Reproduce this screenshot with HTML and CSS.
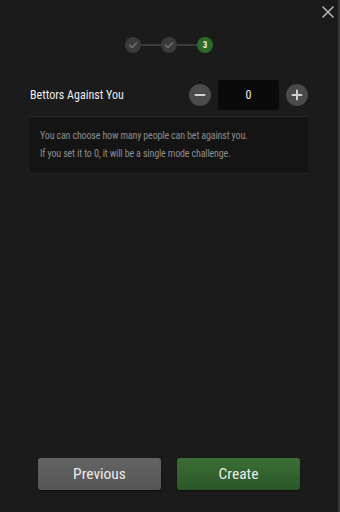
FILE: index.html
```html
<!DOCTYPE html>
<html>
<head>
<meta charset="utf-8">
<link rel="stylesheet" href="styles.css">
</head>
<body>
<div class="modal">
  <button class="close" aria-label="Close">
    <svg width="12" height="12" viewBox="0 0 12 12"><path d="M1 1L11 11M11 1L1 11" stroke="#b4b4b4" stroke-width="1.6" stroke-linecap="round"/></svg>
  </button>
  <div class="steps">
    <span class="step done"><svg width="10" height="10" viewBox="0 0 10 10"><path d="M1.5 5.2L4 7.5L8.5 2.8" fill="none" stroke="#6e6e6e" stroke-width="1.6" stroke-linecap="round" stroke-linejoin="round"/></svg></span>
    <span class="bar"></span>
    <span class="step done"><svg width="10" height="10" viewBox="0 0 10 10"><path d="M1.5 5.2L4 7.5L8.5 2.8" fill="none" stroke="#6e6e6e" stroke-width="1.6" stroke-linecap="round" stroke-linejoin="round"/></svg></span>
    <span class="bar"></span>
    <span class="step active">3</span>
  </div>
  <div class="field">
    <span class="label">Bettors Against You</span>
    <div class="counter">
      <button class="round"><svg width="12" height="12" viewBox="0 0 12 12"><path d="M1.5 6H10.5" stroke="#d0d0d0" stroke-width="2" stroke-linecap="round"/></svg></button>
      <div class="value">0</div>
      <button class="round"><svg width="12" height="12" viewBox="0 0 12 12"><path d="M1.5 6H10.5M6 1.5V10.5" stroke="#d0d0d0" stroke-width="2" stroke-linecap="round"/></svg></button>
    </div>
  </div>
  <div class="info">
    <p>You can choose how many people can bet against you.</p>
    <p>If you set it to 0, it will be a single mode challenge.</p>
  </div>
  <div class="spacer"></div>
  <div class="actions">
    <button class="btn prev">Previous</button>
    <button class="btn create">Create</button>
  </div>
</div>
</body>
</html>
```
FILE: styles.css
```css
html, body {
  margin: 0;
  padding: 0;
  background: #1b1b1b;
}
body {
  width: 340px;
  height: 512px;
  overflow: hidden;
  font-family: "Roboto Condensed", Roboto, "Liberation Sans", sans-serif;
}
.modal {
  position: relative;
  box-sizing: border-box;
  width: 340px;
  height: 512px;
  border-right: 2px solid #363636;
  padding: 37px 30px 22px 30px;
  display: flex;
  flex-direction: column;
  background: #1b1b1b;
}
.close {
  position: absolute;
  top: 6px;
  right: 4px;
  background: none;
  border: 0;
  padding: 0;
  width: 12px;
  height: 12px;
  display: flex;
}
.steps {
  display: flex;
  align-items: center;
  justify-content: center;
  height: 16px;
}
.step {
  width: 16px;
  height: 16px;
  border-radius: 50%;
  display: flex;
  align-items: center;
  justify-content: center;
  flex: none;
}
.step.done {
  background: #3a3a3a;
}
.step.active {
  background: #2c6a2a;
  color: #f0f0f0;
  font-size: 9px;
  font-weight: 700;
}
.bar {
  width: 20px;
  height: 2px;
  background: #3a3a3a;
}
.field {
  display: flex;
  align-items: center;
  justify-content: space-between;
  margin-top: 27px;
}
.label {
  color: #ececec;
  font-size: 12px;
}
.counter {
  display: flex;
  align-items: center;
}
.round {
  width: 22px;
  height: 22px;
  border-radius: 50%;
  border: 0;
  padding: 0;
  background: #4a4a4a;
  display: flex;
  align-items: center;
  justify-content: center;
}
.value {
  width: 61px;
  height: 30px;
  margin: 0 7px;
  background: #0a0a0a;
  border-radius: 3px;
  color: #f0f0f0;
  font-size: 12px;
  display: flex;
  align-items: center;
  justify-content: center;
}
.info {
  margin-top: 6px;
  background: #141414;
  border-top: 1px solid #2a2a2a;
  border-bottom: 1px solid #252525;
  padding: 10px 10px 10px 10px;
  color: #8c8c8c;
  font-size: 10px;
  letter-spacing: -0.15px;
  line-height: 18px;
}
.info p {
  margin: 0;
}
.spacer {
  flex: 1;
}
.actions {
  display: flex;
  justify-content: space-between;
  padding: 0 8px;
}
.btn {
  width: 123px;
  height: 32px;
  border: 0;
  border-radius: 3px;
  font-family: "Roboto Condensed", Roboto, "Liberation Sans", sans-serif;
  font-size: 15.5px;
  color: #ececec;
}
.prev {
  background: linear-gradient(#646464, #555555);
  box-shadow: 0 1px 2px rgba(0,0,0,0.5);
}
.create {
  background: linear-gradient(#3a6e36, #2b5728);
  box-shadow: 0 1px 2px rgba(0,0,0,0.5);
}
```
